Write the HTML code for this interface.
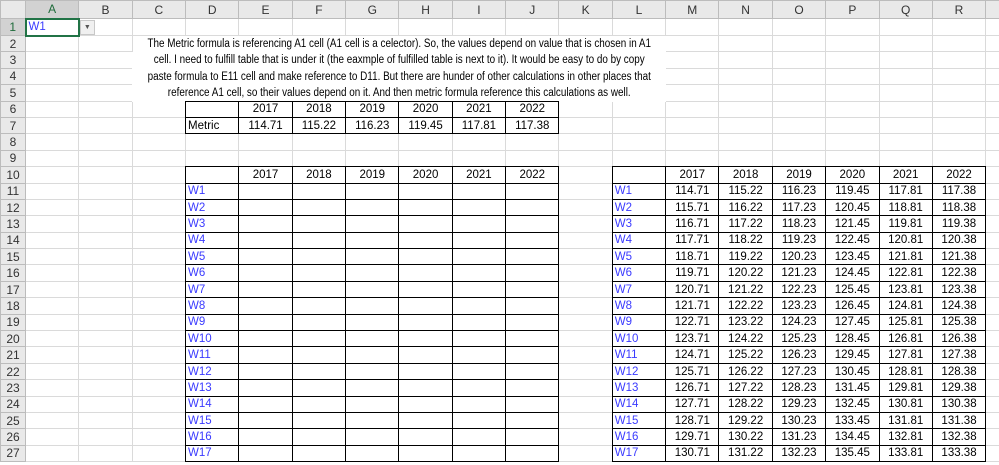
<!DOCTYPE html>
<html><head><style>
body{margin:0;background:#fff;width:999px;height:465px;overflow:hidden;font-family:"Liberation Sans",Arial,sans-serif}
table{border-collapse:collapse;table-layout:fixed;font-size:11.5px;color:#000;width:1015.3px}
td,th{border:1px solid #dadada;padding:0 2px;white-space:nowrap;overflow:hidden;height:15.4px;line-height:14px;box-sizing:border-box}
tbody tr{height:16.4px}
th{background:#e9e9e9;font-weight:normal;color:#333;border-color:#bcbcbc;text-align:center;font-size:12px}
thead tr{height:18px}
thead th{height:18px}
th.sel{background:#d2d2d2;color:#1e6b3a;border-bottom:2px solid #217346}
td.b{border:1px double #000;text-align:center}
td.w{text-align:left;color:#3a3aff}
td.m{border:1px double #000;text-align:left}
td.p{border-color:#fff;padding:0;overflow:visible;position:relative}
td.p div{position:absolute;left:-40px;right:-40px;top:0;text-align:center;font-size:11.5px;line-height:16.4px;transform:scaleX(0.86)}
td.a1{border:2px solid #217346;color:#3a3aff}
</style></head><body>
<table>
<colgroup><col style="width:25px"><col style="width:53.35px"><col style="width:53.35px"><col style="width:53.35px"><col style="width:53.35px"><col style="width:53.35px"><col style="width:53.35px"><col style="width:53.35px"><col style="width:53.35px"><col style="width:53.35px"><col style="width:53.35px"><col style="width:53.35px"><col style="width:53.35px"><col style="width:53.35px"><col style="width:53.35px"><col style="width:53.35px"><col style="width:53.35px"><col style="width:53.35px"><col style="width:53.35px"><col style="width:30px"></colgroup>
<thead><tr><th></th><th class="sel">A</th><th>B</th><th>C</th><th>D</th><th>E</th><th>F</th><th>G</th><th>H</th><th>I</th><th>J</th><th>K</th><th>L</th><th>M</th><th>N</th><th>O</th><th>P</th><th>Q</th><th>R</th><th></th></tr></thead>
<tbody>
<tr><th class="sel" style="border-bottom:1px solid #bcbcbc">1</th><td class="a1">W1</td><td style="padding:0"><span style="display:inline-block;width:13px;height:13px;background:#f0f0f0;border:1px solid #c8c8c8;font-size:7px;color:#555;text-align:center;line-height:13px">&#9660;</span></td><td></td><td></td><td></td><td></td><td></td><td></td><td></td><td></td><td></td><td></td><td></td><td></td><td></td><td></td><td></td><td></td><td></td></tr>
<tr><th>2</th><td></td><td></td><td class="p" colspan="10" rowspan="4"><div>The Metric formula is referencing A1 cell (A1 cell is a celector). So, the values depend on value that is chosen in A1<br>cell. I need to fulfill table that is under it (the eaxmple of fulfilled table is next to it). It would be easy to do by copy<br>paste formula to E11 cell and make reference to D11. But there are hunder of other calculations in other places that<br>reference A1 cell, so their values depend on it. And then metric formula reference this calculations as well.</div></td><td></td><td></td><td></td><td></td><td></td><td></td><td></td></tr>
<tr><th>3</th><td></td><td></td><td></td><td></td><td></td><td></td><td></td><td></td><td></td></tr>
<tr><th>4</th><td></td><td></td><td></td><td></td><td></td><td></td><td></td><td></td><td></td></tr>
<tr><th>5</th><td></td><td></td><td></td><td></td><td></td><td></td><td></td><td></td><td></td></tr>
<tr><th>6</th><td></td><td></td><td></td><td class="b"></td><td class="b">2017</td><td class="b">2018</td><td class="b">2019</td><td class="b">2020</td><td class="b">2021</td><td class="b">2022</td><td></td><td></td><td></td><td></td><td></td><td></td><td></td><td></td><td></td></tr>
<tr><th>7</th><td></td><td></td><td></td><td class="m">Metric</td><td class="b">114.71</td><td class="b">115.22</td><td class="b">116.23</td><td class="b">119.45</td><td class="b">117.81</td><td class="b">117.38</td><td></td><td></td><td></td><td></td><td></td><td></td><td></td><td></td><td></td></tr>
<tr><th>8</th><td></td><td></td><td></td><td></td><td></td><td></td><td></td><td></td><td></td><td></td><td></td><td></td><td></td><td></td><td></td><td></td><td></td><td></td><td></td></tr>
<tr><th>9</th><td></td><td></td><td></td><td></td><td></td><td></td><td></td><td></td><td></td><td></td><td></td><td></td><td></td><td></td><td></td><td></td><td></td><td></td><td></td></tr>
<tr><th>10</th><td></td><td></td><td></td><td class="b"></td><td class="b">2017</td><td class="b">2018</td><td class="b">2019</td><td class="b">2020</td><td class="b">2021</td><td class="b">2022</td><td></td><td class="b"></td><td class="b">2017</td><td class="b">2018</td><td class="b">2019</td><td class="b">2020</td><td class="b">2021</td><td class="b">2022</td><td></td></tr>
<tr><th>11</th><td></td><td></td><td></td><td class="b w">W1</td><td class="b"></td><td class="b"></td><td class="b"></td><td class="b"></td><td class="b"></td><td class="b"></td><td></td><td class="b w">W1</td><td class="b">114.71</td><td class="b">115.22</td><td class="b">116.23</td><td class="b">119.45</td><td class="b">117.81</td><td class="b">117.38</td><td></td></tr>
<tr><th>12</th><td></td><td></td><td></td><td class="b w">W2</td><td class="b"></td><td class="b"></td><td class="b"></td><td class="b"></td><td class="b"></td><td class="b"></td><td></td><td class="b w">W2</td><td class="b">115.71</td><td class="b">116.22</td><td class="b">117.23</td><td class="b">120.45</td><td class="b">118.81</td><td class="b">118.38</td><td></td></tr>
<tr><th>13</th><td></td><td></td><td></td><td class="b w">W3</td><td class="b"></td><td class="b"></td><td class="b"></td><td class="b"></td><td class="b"></td><td class="b"></td><td></td><td class="b w">W3</td><td class="b">116.71</td><td class="b">117.22</td><td class="b">118.23</td><td class="b">121.45</td><td class="b">119.81</td><td class="b">119.38</td><td></td></tr>
<tr><th>14</th><td></td><td></td><td></td><td class="b w">W4</td><td class="b"></td><td class="b"></td><td class="b"></td><td class="b"></td><td class="b"></td><td class="b"></td><td></td><td class="b w">W4</td><td class="b">117.71</td><td class="b">118.22</td><td class="b">119.23</td><td class="b">122.45</td><td class="b">120.81</td><td class="b">120.38</td><td></td></tr>
<tr><th>15</th><td></td><td></td><td></td><td class="b w">W5</td><td class="b"></td><td class="b"></td><td class="b"></td><td class="b"></td><td class="b"></td><td class="b"></td><td></td><td class="b w">W5</td><td class="b">118.71</td><td class="b">119.22</td><td class="b">120.23</td><td class="b">123.45</td><td class="b">121.81</td><td class="b">121.38</td><td></td></tr>
<tr><th>16</th><td></td><td></td><td></td><td class="b w">W6</td><td class="b"></td><td class="b"></td><td class="b"></td><td class="b"></td><td class="b"></td><td class="b"></td><td></td><td class="b w">W6</td><td class="b">119.71</td><td class="b">120.22</td><td class="b">121.23</td><td class="b">124.45</td><td class="b">122.81</td><td class="b">122.38</td><td></td></tr>
<tr><th>17</th><td></td><td></td><td></td><td class="b w">W7</td><td class="b"></td><td class="b"></td><td class="b"></td><td class="b"></td><td class="b"></td><td class="b"></td><td></td><td class="b w">W7</td><td class="b">120.71</td><td class="b">121.22</td><td class="b">122.23</td><td class="b">125.45</td><td class="b">123.81</td><td class="b">123.38</td><td></td></tr>
<tr><th>18</th><td></td><td></td><td></td><td class="b w">W8</td><td class="b"></td><td class="b"></td><td class="b"></td><td class="b"></td><td class="b"></td><td class="b"></td><td></td><td class="b w">W8</td><td class="b">121.71</td><td class="b">122.22</td><td class="b">123.23</td><td class="b">126.45</td><td class="b">124.81</td><td class="b">124.38</td><td></td></tr>
<tr><th>19</th><td></td><td></td><td></td><td class="b w">W9</td><td class="b"></td><td class="b"></td><td class="b"></td><td class="b"></td><td class="b"></td><td class="b"></td><td></td><td class="b w">W9</td><td class="b">122.71</td><td class="b">123.22</td><td class="b">124.23</td><td class="b">127.45</td><td class="b">125.81</td><td class="b">125.38</td><td></td></tr>
<tr><th>20</th><td></td><td></td><td></td><td class="b w">W10</td><td class="b"></td><td class="b"></td><td class="b"></td><td class="b"></td><td class="b"></td><td class="b"></td><td></td><td class="b w">W10</td><td class="b">123.71</td><td class="b">124.22</td><td class="b">125.23</td><td class="b">128.45</td><td class="b">126.81</td><td class="b">126.38</td><td></td></tr>
<tr><th>21</th><td></td><td></td><td></td><td class="b w">W11</td><td class="b"></td><td class="b"></td><td class="b"></td><td class="b"></td><td class="b"></td><td class="b"></td><td></td><td class="b w">W11</td><td class="b">124.71</td><td class="b">125.22</td><td class="b">126.23</td><td class="b">129.45</td><td class="b">127.81</td><td class="b">127.38</td><td></td></tr>
<tr><th>22</th><td></td><td></td><td></td><td class="b w">W12</td><td class="b"></td><td class="b"></td><td class="b"></td><td class="b"></td><td class="b"></td><td class="b"></td><td></td><td class="b w">W12</td><td class="b">125.71</td><td class="b">126.22</td><td class="b">127.23</td><td class="b">130.45</td><td class="b">128.81</td><td class="b">128.38</td><td></td></tr>
<tr><th>23</th><td></td><td></td><td></td><td class="b w">W13</td><td class="b"></td><td class="b"></td><td class="b"></td><td class="b"></td><td class="b"></td><td class="b"></td><td></td><td class="b w">W13</td><td class="b">126.71</td><td class="b">127.22</td><td class="b">128.23</td><td class="b">131.45</td><td class="b">129.81</td><td class="b">129.38</td><td></td></tr>
<tr><th>24</th><td></td><td></td><td></td><td class="b w">W14</td><td class="b"></td><td class="b"></td><td class="b"></td><td class="b"></td><td class="b"></td><td class="b"></td><td></td><td class="b w">W14</td><td class="b">127.71</td><td class="b">128.22</td><td class="b">129.23</td><td class="b">132.45</td><td class="b">130.81</td><td class="b">130.38</td><td></td></tr>
<tr><th>25</th><td></td><td></td><td></td><td class="b w">W15</td><td class="b"></td><td class="b"></td><td class="b"></td><td class="b"></td><td class="b"></td><td class="b"></td><td></td><td class="b w">W15</td><td class="b">128.71</td><td class="b">129.22</td><td class="b">130.23</td><td class="b">133.45</td><td class="b">131.81</td><td class="b">131.38</td><td></td></tr>
<tr><th>26</th><td></td><td></td><td></td><td class="b w">W16</td><td class="b"></td><td class="b"></td><td class="b"></td><td class="b"></td><td class="b"></td><td class="b"></td><td></td><td class="b w">W16</td><td class="b">129.71</td><td class="b">130.22</td><td class="b">131.23</td><td class="b">134.45</td><td class="b">132.81</td><td class="b">132.38</td><td></td></tr>
<tr><th>27</th><td></td><td></td><td></td><td class="b w">W17</td><td class="b"></td><td class="b"></td><td class="b"></td><td class="b"></td><td class="b"></td><td class="b"></td><td></td><td class="b w">W17</td><td class="b">130.71</td><td class="b">131.22</td><td class="b">132.23</td><td class="b">135.45</td><td class="b">133.81</td><td class="b">133.38</td><td></td></tr>
</tbody></table>
</body></html>
